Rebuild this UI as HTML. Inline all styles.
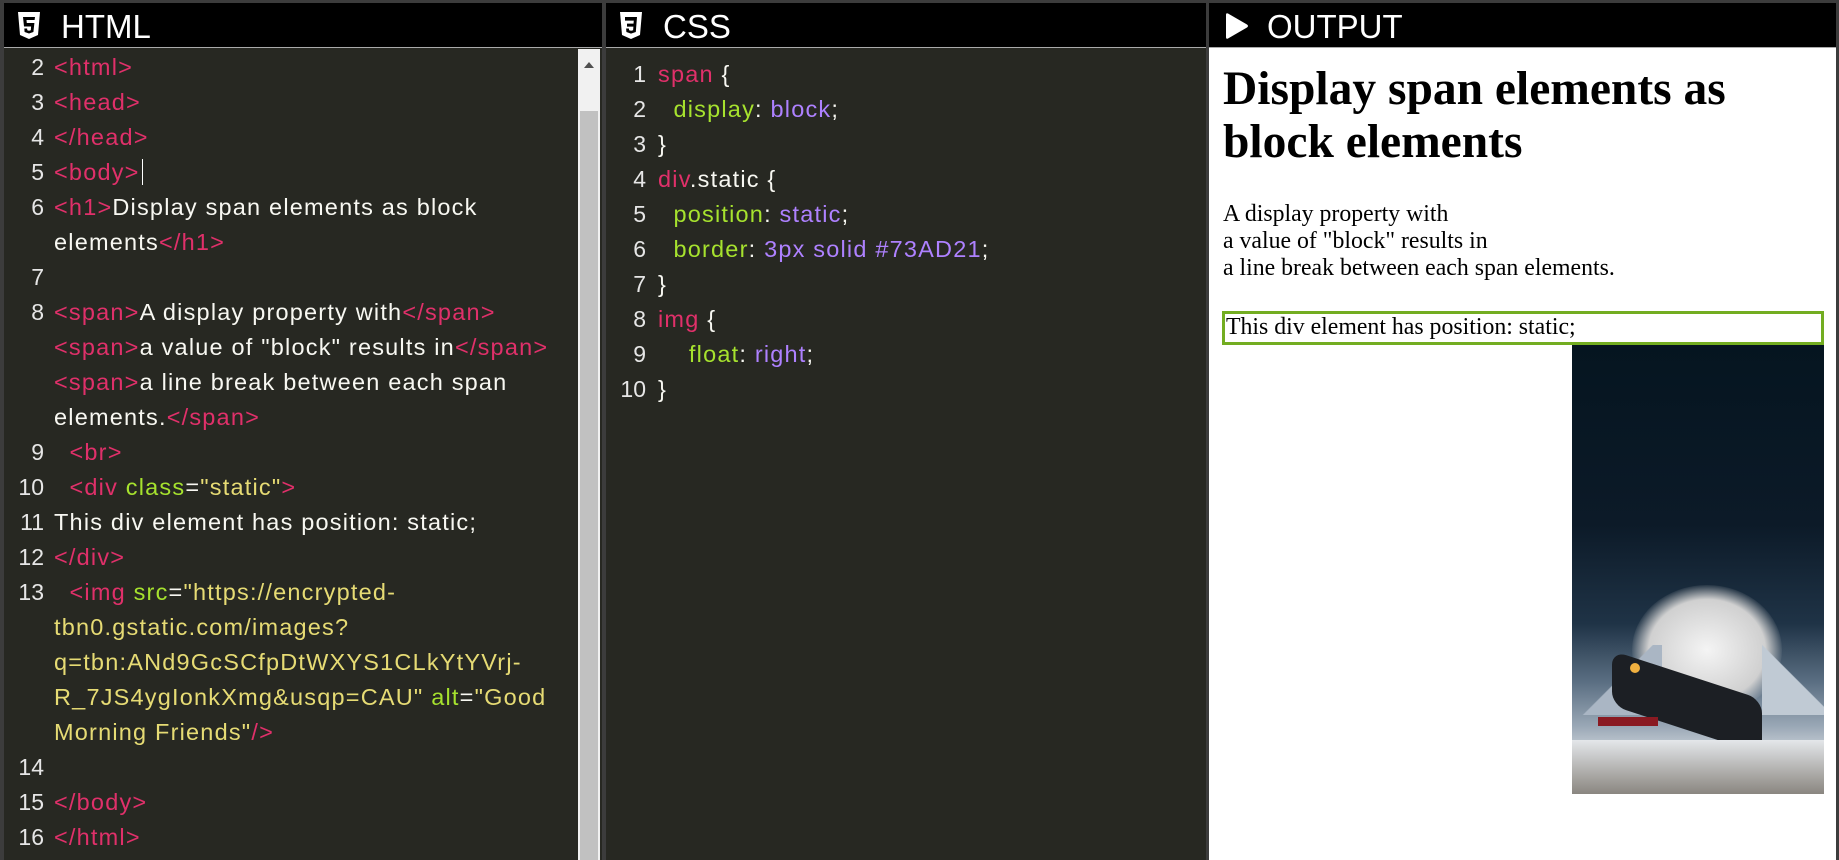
<!DOCTYPE html>
<html><head><meta charset="utf-8"><style>
*{margin:0;padding:0;box-sizing:border-box}
body{width:1839px;height:860px;background:#3c3c3c;position:relative;overflow:hidden;font-family:"Liberation Sans",sans-serif}
.pane{position:absolute;top:3px;bottom:0;background:#272822}
.hdr{position:absolute;left:0;right:0;top:0;height:45px;background:#000;color:#fff;font-size:33px;line-height:47px;border-bottom:1px solid #aaa}
.hdr svg{position:absolute;top:9px}
.hdr span{position:absolute;top:0}
.code{position:absolute;font-size:23.5px;line-height:35px;color:#f8f8f2;white-space:pre;letter-spacing:1.2px}
.ln{position:absolute;text-align:right;font-size:23px;line-height:35px;color:#e6e6e6;white-space:pre}
.t{color:#e0306a}.a{color:#a6e22e}.s{color:#e6db74}.p{color:#ae81ff}
</style></head><body>
<!-- HTML pane -->
<div class="pane" style="left:4px;width:598px">
  <div class="hdr"><svg width="22" height="28" viewBox="0 0 22 28" style="left:14px"><path d="M0 0h22l-2 23-9 4-9-4z" fill="#fff"/><path d="M5 5h12l-.4 3H8.5l.3 3h7.6l-1 9-4.4 1.5L6.6 20l-.3-3.5h2.8l.2 1.7 1.7.5 1.8-.5.3-3.7H6z" fill="#000"/></svg><span style="left:57px">HTML</span></div>
  <div class="ln" style="left:0;width:40px;top:47px">2
3
4
5
6

7
8



9
10
11
12
13




14
15
16</div>
  <div class="code" style="left:50px;top:47px"><span class="t">&lt;html&gt;</span>
<span class="t">&lt;head&gt;</span>
<span class="t">&lt;/head&gt;</span>
<span class="t">&lt;body&gt;</span><span style="border-left:1px solid #fff;margin-left:2px"></span>
<span class="t">&lt;h1&gt;</span>Display span elements as block
elements<span class="t">&lt;/h1&gt;</span>

<span class="t">&lt;span&gt;</span>A display property with<span class="t">&lt;/span&gt;</span>
<span class="t">&lt;span&gt;</span>a value of "block" results in<span class="t">&lt;/span&gt;</span>
<span class="t">&lt;span&gt;</span>a line break between each span
elements.<span class="t">&lt;/span&gt;</span>
  <span class="t">&lt;br&gt;</span>
  <span class="t">&lt;div</span> <span class="a">class</span>=<span class="s">"static"</span><span class="t">&gt;</span>
This div element has position: static;
<span class="t">&lt;/div&gt;</span>
  <span class="t">&lt;img</span> <span class="a">src</span>=<span class="s">"https://encrypted-
tbn0.gstatic.com/images?
q=tbn:ANd9GcSCfpDtWXYS1CLkYtYVrj-
R_7JS4ygIonkXmg&amp;usqp=CAU"</span> <span class="a">alt</span>=<span class="s">"Good
Morning Friends"</span><span class="t">/&gt;</span>

<span class="t">&lt;/body&gt;</span>
<span class="t">&lt;/html&gt;</span></div>
  <div style="position:absolute;left:574px;top:46px;width:22px;bottom:0;background:#f1f1f1"></div>
  <div style="position:absolute;left:576px;top:108px;width:18px;bottom:0;background:#c1c1c1"></div>
  <div style="position:absolute;left:580px;top:59px;width:0;height:0;border-left:5px solid transparent;border-right:5px solid transparent;border-bottom:6px solid #505050"></div>
</div>
<!-- CSS pane -->
<div class="pane" style="left:606px;width:600px">
  <div class="hdr"><svg width="22" height="28" viewBox="0 0 22 28" style="left:14px"><path d="M0 0h22l-2 23-9 4-9-4z" fill="#fff"/><path d="M5 5h12l-1.2 15-4.8 1.6L6.4 20l-.3-3.5h2.8l.2 1.7 2 .6 2-.6.3-3.6H7v-3h6.5l.3-3H5z" fill="#000"/></svg><span style="left:57px">CSS</span></div>
  <div class="ln" style="left:0;width:40px;top:54px">1
2
3
4
5
6
7
8
9
10</div>
  <div class="code" style="left:52px;top:54px"><span class="t">span</span> {
  <span class="a">display</span>: <span class="p">block</span>;
}
<span class="t">div</span>.static {
  <span class="a">position</span>: <span class="p">static</span>;
  <span class="a">border</span>: <span class="p">3px solid #73AD21</span>;
}
<span class="t">img</span> {
    <span class="a">float</span>: <span class="p">right</span>;
}</div>
</div>
<!-- OUTPUT pane -->
<div class="pane" style="left:1209px;width:627px;background:#fff">
  <div class="hdr"><svg width="24" height="28" viewBox="0 0 24 28" style="left:16px"><path d="M3 1.5Q1 0.5 1 3v22q0 2.5 2 1.5l19-11q2-1.5 0-3z" fill="#fff"/></svg><span style="left:58px">OUTPUT</span></div>
  <div style="position:absolute;left:14px;top:60px;font-family:'Liberation Serif',serif;font-weight:bold;font-size:47.5px;line-height:53px;color:#000">Display span elements as<br>block elements</div>
  <div style="position:absolute;left:14px;top:198px;font-family:'Liberation Serif',serif;font-size:23.8px;line-height:27px;color:#000">A display property with<br>a value of "block" results in<br>a line break between each span elements.</div>
  <div style="position:absolute;left:13px;top:308px;width:602px;height:34px;border:3px solid #73AD21;font-family:'Liberation Serif',serif;font-size:23.8px;line-height:27px;padding-left:1px;color:#000">This div element has position: static;</div>
  <div style="position:absolute;left:363px;top:342px;width:252px;height:449px;background:linear-gradient(#051520 0%,#0c1a28 40%,#1f3346 62%,#5a6e82 75%,#9aa8b6 85%,#d8dde2 92%,#7a7a78 100%);overflow:hidden">
    <div style="position:absolute;left:60px;top:240px;width:150px;height:130px;border-radius:50%;background:radial-gradient(#f4f4f4,#d0d0d0 55%,rgba(200,200,200,0) 72%)"></div>
    <div style="position:absolute;left:0;top:300px;width:90px;height:70px;background:linear-gradient(135deg,transparent 50%,#aab6c4 51%)"></div>
    <div style="position:absolute;left:190px;top:290px;width:62px;height:80px;background:linear-gradient(225deg,transparent 50%,#c0cad4 51%)"></div>
    <div style="position:absolute;left:40px;top:330px;width:150px;height:55px;background:#1c1f24;transform:skewY(18deg);border-radius:14px"></div>
    <div style="position:absolute;left:58px;top:318px;width:10px;height:10px;border-radius:50%;background:#f0b040"></div>
    <div style="position:absolute;left:26px;top:372px;width:60px;height:9px;background:#8a1a22"></div>
    <div style="position:absolute;left:0;top:395px;width:252px;height:54px;background:linear-gradient(#e4e7ea,#8a8680)"></div>
  </div>
</div>
</body></html>
